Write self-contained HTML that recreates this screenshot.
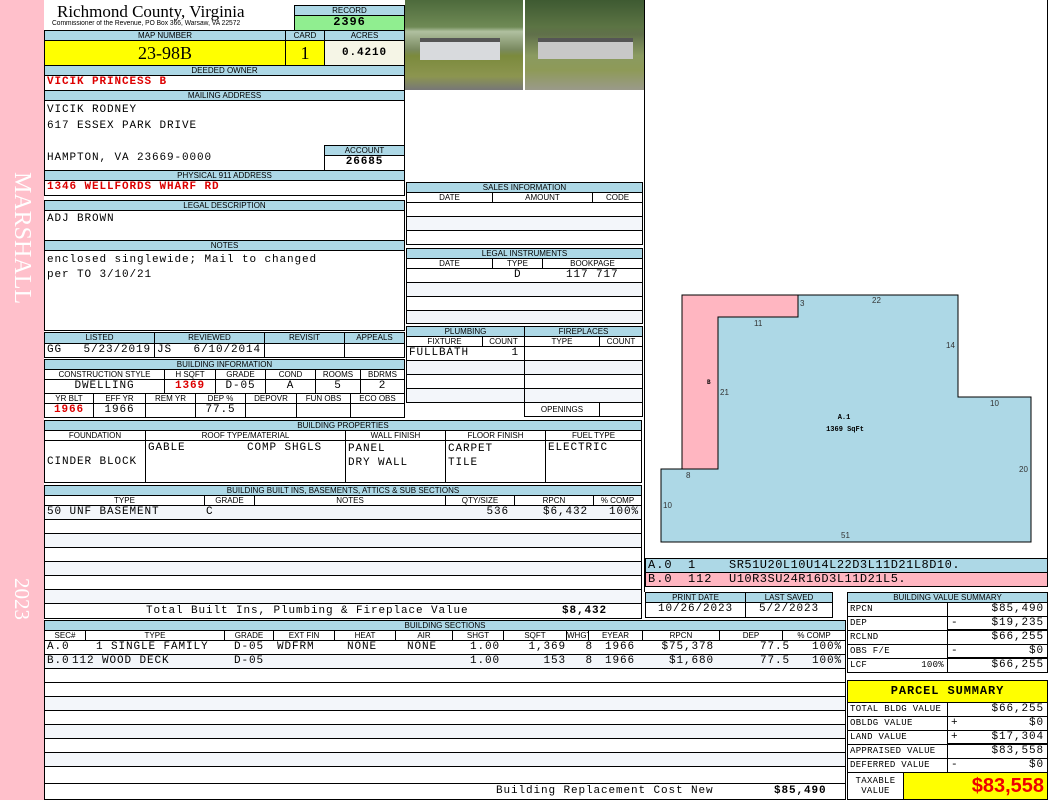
<!DOCTYPE html>
<html><head><meta charset="utf-8"><style>
*{margin:0;padding:0}
body{width:1050px;height:800px;position:relative;background:#fff;overflow:hidden;font-family:"Liberation Mono",monospace}
.a{position:absolute;box-sizing:border-box;white-space:nowrap;overflow:hidden}
.h{background:#add8e6;border:1px solid #000;font:8px/9px "Liberation Sans",sans-serif;text-align:center;color:#000}
.s{background:#fff;border:1px solid #000;font:8px/9px "Liberation Sans",sans-serif;text-align:center}
.c{background:#fff;border:1px solid #000;font:11px/13px "Liberation Mono",monospace;padding-left:2px;letter-spacing:0.9px}
.z{background:#f3f6fa}
.r{text-align:right;padding-right:3px}
.m{text-align:center;padding-left:0}
.red{color:#d00;font-weight:bold}
.sm{font:9px/12px "Liberation Mono",monospace;letter-spacing:0.3px}
.t{position:absolute;top:0;font:11px/13px "Liberation Mono",monospace;letter-spacing:0.9px}
.e{position:absolute;top:0;font:11px/13px "Liberation Mono",monospace;letter-spacing:0.9px;text-align:right}
</style></head><body>
<div class="a" style="left:0;top:0;width:44px;height:800px;background:#ffc0cb"></div>
<div class="a" style="left:6px;top:172px;width:32px;height:170px;color:#fff;font:24px/32px 'Liberation Serif',serif;writing-mode:vertical-rl">MARSHALL</div>
<div class="a" style="left:6px;top:578px;width:32px;height:50px;color:#fff;font:21px/32px 'Liberation Serif',serif;writing-mode:vertical-rl">2023</div>

<!-- header -->
<div class="a" style="left:57px;top:2px;font:17px/20px 'Liberation Serif',serif">Richmond County, Virginia</div>
<div class="a" style="left:52px;top:19px;font:7px/9px 'Liberation Sans',sans-serif;transform:scaleX(.95);transform-origin:left">Commissioner of the Revenue, PO Box 366, Warsaw, VA 22572</div>
<div class="a h" style="left:294px;top:5px;width:111px;height:11px">RECORD</div>
<div class="a c m" style="left:294px;top:15px;width:111px;height:16px;background:#90ee90;font-weight:bold;font-size:12px">2396</div>
<div class="a h" style="left:44px;top:30px;width:242px;height:11px">MAP NUMBER</div>
<div class="a h" style="left:285px;top:30px;width:40px;height:11px">CARD</div>
<div class="a h" style="left:324px;top:30px;width:81px;height:11px">ACRES</div>
<div class="a c m" style="left:44px;top:40px;width:242px;height:26px;background:#ffff00;font:18px/24px 'Liberation Serif',serif;letter-spacing:0">23-98B</div>
<div class="a c m" style="left:285px;top:40px;width:40px;height:26px;background:#ffff00;font:18px/24px 'Liberation Serif',serif;letter-spacing:0">1</div>
<div class="a c m" style="left:324px;top:40px;width:81px;height:26px;background:#f5f5e6;font-weight:bold;line-height:24px">0.4210</div>
<div class="a h" style="left:44px;top:65px;width:361px;height:11px">DEEDED OWNER</div>
<div class="a c red" style="left:44px;top:75px;width:361px;height:16px">VICIK PRINCESS B</div>
<div class="a h" style="left:44px;top:90px;width:361px;height:11px">MAILING ADDRESS</div>
<div class="a c" style="left:44px;top:100px;width:361px;height:71px;line-height:16px;padding-top:1px">VICIK RODNEY<br>617 ESSEX PARK DRIVE<br><br>HAMPTON, VA 23669-0000</div>
<div class="a h" style="left:324px;top:145px;width:81px;height:11px">ACCOUNT</div>
<div class="a c m" style="left:324px;top:155px;width:81px;height:16px;font-weight:bold">26685</div>
<div class="a h" style="left:44px;top:170px;width:361px;height:11px">PHYSICAL 911 ADDRESS</div>
<div class="a c red" style="left:44px;top:180px;width:361px;height:16px">1346 WELLFORDS WHARF RD</div>
<div class="a h" style="left:44px;top:200px;width:361px;height:11px">LEGAL DESCRIPTION</div>
<div class="a c" style="left:44px;top:210px;width:361px;height:31px;padding-top:2px">ADJ BROWN</div>
<div class="a h" style="left:44px;top:240px;width:361px;height:11px">NOTES</div>
<div class="a c" style="left:44px;top:250px;width:361px;height:81px;line-height:15px;padding-top:2px">enclosed singlewide; Mail to changed<br>per TO 3/10/21</div>

<!-- listed -->
<div class="a h" style="left:44px;top:332px;width:111px;height:12px">LISTED</div>
<div class="a h" style="left:154px;top:332px;width:111px;height:12px">REVIEWED</div>
<div class="a h" style="left:264px;top:332px;width:81px;height:12px">REVISIT</div>
<div class="a h" style="left:344px;top:332px;width:61px;height:12px">APPEALS</div>
<div class="a c" style="left:44px;top:343px;width:111px;height:15px">GG<span class="e" style="right:3px">5/23/2019</span></div>
<div class="a c" style="left:154px;top:343px;width:111px;height:15px">JS<span class="e" style="right:3px">6/10/2014</span></div>
<div class="a c" style="left:264px;top:343px;width:81px;height:15px"></div>
<div class="a c" style="left:344px;top:343px;width:61px;height:15px"></div>

<!-- building info -->
<div class="a h" style="left:44px;top:359px;width:361px;height:11px">BUILDING INFORMATION</div>
<div class="a s" style="left:44px;top:369px;width:121px;height:11px">CONSTRUCTION STYLE</div>
<div class="a s" style="left:164px;top:369px;width:52px;height:11px">H SQFT</div>
<div class="a s" style="left:215px;top:369px;width:51px;height:11px">GRADE</div>
<div class="a s" style="left:265px;top:369px;width:51px;height:11px">COND</div>
<div class="a s" style="left:315px;top:369px;width:46px;height:11px">ROOMS</div>
<div class="a s" style="left:360px;top:369px;width:45px;height:11px">BDRMS</div>
<div class="a c m" style="left:44px;top:379px;width:121px;height:15px">DWELLING</div>
<div class="a c m red" style="left:164px;top:379px;width:52px;height:15px">1369</div>
<div class="a c m" style="left:215px;top:379px;width:51px;height:15px">D-05</div>
<div class="a c m" style="left:265px;top:379px;width:51px;height:15px">A</div>
<div class="a c m" style="left:315px;top:379px;width:46px;height:15px">5</div>
<div class="a c m" style="left:360px;top:379px;width:45px;height:15px">2</div>
<div class="a s" style="left:44px;top:393px;width:50px;height:11px">YR BLT</div>
<div class="a s" style="left:93px;top:393px;width:53px;height:11px">EFF YR</div>
<div class="a s" style="left:145px;top:393px;width:51px;height:11px">REM YR</div>
<div class="a s" style="left:195px;top:393px;width:51px;height:11px">DEP %</div>
<div class="a s" style="left:245px;top:393px;width:52px;height:11px">DEPOVR</div>
<div class="a s" style="left:296px;top:393px;width:55px;height:11px">FUN OBS</div>
<div class="a s" style="left:350px;top:393px;width:55px;height:11px">ECO OBS</div>
<div class="a c m red" style="left:44px;top:403px;width:50px;height:15px">1966</div>
<div class="a c m" style="left:93px;top:403px;width:53px;height:15px">1966</div>
<div class="a c" style="left:145px;top:403px;width:51px;height:15px"></div>
<div class="a c m" style="left:195px;top:403px;width:51px;height:15px">77.5</div>
<div class="a c" style="left:245px;top:403px;width:52px;height:15px"></div>
<div class="a c" style="left:296px;top:403px;width:55px;height:15px"></div>
<div class="a c" style="left:350px;top:403px;width:55px;height:15px"></div>

<!-- building properties -->
<div class="a h" style="left:44px;top:420px;width:598px;height:11px">BUILDING PROPERTIES</div>
<div class="a s" style="left:44px;top:430px;width:102px;height:11px">FOUNDATION</div>
<div class="a s" style="left:145px;top:430px;width:201px;height:11px">ROOF TYPE/MATERIAL</div>
<div class="a s" style="left:345px;top:430px;width:101px;height:11px">WALL FINISH</div>
<div class="a s" style="left:445px;top:430px;width:101px;height:11px">FLOOR FINISH</div>
<div class="a s" style="left:545px;top:430px;width:97px;height:11px">FUEL TYPE</div>
<div class="a c" style="left:44px;top:440px;width:102px;height:43px;padding-top:15px">CINDER BLOCK</div>
<div class="a c" style="left:145px;top:440px;width:201px;height:43px;padding-top:1px">GABLE<span class="t" style="left:101px;top:1px">COMP SHGLS</span></div>
<div class="a c" style="left:345px;top:440px;width:101px;height:43px;padding-top:1px;line-height:14px">PANEL<br>DRY WALL</div>
<div class="a c" style="left:445px;top:440px;width:101px;height:43px;padding-top:1px;line-height:14px">CARPET<br>TILE</div>
<div class="a c" style="left:545px;top:440px;width:97px;height:43px;padding-top:1px">ELECTRIC</div>

<!-- built ins -->
<div class="a h" style="left:44px;top:485px;width:598px;height:11px">BUILDING BUILT INS, BASEMENTS, ATTICS &amp; SUB SECTIONS</div>
<div class="a s" style="left:44px;top:495px;width:161px;height:11px">TYPE</div>
<div class="a s" style="left:204px;top:495px;width:51px;height:11px">GRADE</div>
<div class="a s" style="left:254px;top:495px;width:192px;height:11px">NOTES</div>
<div class="a s" style="left:445px;top:495px;width:70px;height:11px">QTY/SIZE</div>
<div class="a s" style="left:514px;top:495px;width:80px;height:11px">RPCN</div>
<div class="a s" style="left:593px;top:495px;width:49px;height:11px">% COMP</div>
<div class="a c" style="left:44px;top:505px;width:598px;height:15px;background:#f3f6fa">50 UNF BASEMENT<span class="t" style="left:161px">C</span><span class="e" style="right:132px">536</span><span class="e" style="right:53px">$6,432</span><span class="e" style="right:2px">100%</span></div>
<div class="a c" style="left:44px;top:519px;width:598px;height:15px"></div>
<div class="a c z" style="left:44px;top:533px;width:598px;height:15px"></div>
<div class="a c" style="left:44px;top:547px;width:598px;height:15px"></div>
<div class="a c z" style="left:44px;top:561px;width:598px;height:15px"></div>
<div class="a c" style="left:44px;top:575px;width:598px;height:15px"></div>
<div class="a c z" style="left:44px;top:589px;width:598px;height:15px"></div>
<div class="a c" style="left:44px;top:603px;width:598px;height:16px;padding-left:101px;line-height:15px">Total Built Ins, Plumbing &amp; Fireplace Value<span style="position:absolute;left:517px;font-weight:bold">$8,432</span></div>

<!-- building sections -->
<div class="a h" style="left:44px;top:620px;width:802px;height:11px">BUILDING SECTIONS</div>
<div class="a" style="left:44px;top:630px;width:802px;height:11px;border:1px solid #000;font:8px/9px 'Liberation Sans',sans-serif">
<span class="a s" style="left:-1px;top:-1px;width:42px;height:11px">SEC#</span><span class="a s" style="left:40px;top:-1px;width:140px;height:11px">TYPE</span><span class="a s" style="left:179px;top:-1px;width:50px;height:11px">GRADE</span><span class="a s" style="left:228px;top:-1px;width:62px;height:11px">EXT FIN</span><span class="a s" style="left:289px;top:-1px;width:62px;height:11px">HEAT</span><span class="a s" style="left:350px;top:-1px;width:58px;height:11px">AIR</span><span class="a s" style="left:407px;top:-1px;width:52px;height:11px">SHGT</span><span class="a s" style="left:458px;top:-1px;width:64px;height:11px">SQFT</span><span class="a s" style="left:521px;top:-1px;width:23px;height:11px">WHGT</span><span class="a s" style="left:543px;top:-1px;width:55px;height:11px">EYEAR</span><span class="a s" style="left:597px;top:-1px;width:78px;height:11px">RPCN</span><span class="a s" style="left:674px;top:-1px;width:64px;height:11px">DEP</span><span class="a s" style="left:737px;top:-1px;width:64px;height:11px">% COMP</span></div>
<div class="a c" style="left:44px;top:640px;width:802px;height:15px">A.0<span class="t" style="left:51px">1 SINGLE FAMILY</span><span class="t" style="left:189px">D-05</span><span class="t" style="left:232px">WDFRM</span><span class="t" style="left:302px">NONE</span><span class="t" style="left:362px">NONE</span><span class="e" style="right:345px">1.00</span><span class="e" style="right:279px">1,369</span><span class="e" style="right:252px">8</span><span class="t" style="left:560px">1966</span><span class="e" style="right:131px">$75,378</span><span class="e" style="right:55px">77.5</span><span class="e" style="right:3px">100%</span></div>
<div class="a c z" style="left:44px;top:654px;width:802px;height:15px">B.0<span class="t" style="left:27px">112 WOOD DECK</span><span class="t" style="left:189px">D-05</span><span class="e" style="right:345px">1.00</span><span class="e" style="right:279px">153</span><span class="e" style="right:252px">8</span><span class="t" style="left:560px">1966</span><span class="e" style="right:131px">$1,680</span><span class="e" style="right:55px">77.5</span><span class="e" style="right:3px">100%</span></div>
<div class="a c" style="left:44px;top:668px;width:802px;height:15px"></div>
<div class="a c" style="left:44px;top:682px;width:802px;height:15px"></div>
<div class="a c z" style="left:44px;top:696px;width:802px;height:15px"></div>
<div class="a c" style="left:44px;top:710px;width:802px;height:15px"></div>
<div class="a c z" style="left:44px;top:724px;width:802px;height:15px"></div>
<div class="a c" style="left:44px;top:738px;width:802px;height:15px"></div>
<div class="a c z" style="left:44px;top:752px;width:802px;height:15px"></div>
<div class="a c" style="left:44px;top:766px;width:802px;height:18px"></div>
<div class="a c" style="left:44px;top:783px;width:802px;height:17px;padding-left:451px;line-height:15px">Building Replacement Cost New<span style="position:absolute;left:729px;font-weight:bold">$85,490</span></div>

<!-- photos -->
<div class="a" style="left:405px;top:0;width:118px;height:90px;background:linear-gradient(#4d6a3c 0,#6f8a55 30%,#b0c0a0 35%,#7a8a60 55%,#7b8a3c 62%,#8c9550 85%,#777 100%)"></div>
<div class="a" style="left:420px;top:38px;width:80px;height:22px;background:#d8dadd;border-top:4px solid #555"></div>
<div class="a" style="left:525px;top:0;width:119px;height:90px;background:linear-gradient(#3e5a32 0,#5c7444 30%,#60704a 38%,#8a9a60 62%,#8e9a58 78%,#9a9a8a 100%)"></div>
<div class="a" style="left:538px;top:38px;width:95px;height:21px;background:#c8c8c8;border-top:4px solid #555"></div>

<!-- sales -->
<div class="a h" style="left:406px;top:182px;width:237px;height:11px">SALES INFORMATION</div>
<div class="a s" style="left:406px;top:192px;width:87px;height:11px">DATE</div>
<div class="a s" style="left:492px;top:192px;width:101px;height:11px">AMOUNT</div>
<div class="a s" style="left:592px;top:192px;width:51px;height:11px">CODE</div>
<div class="a c" style="left:406px;top:202px;width:237px;height:15px"></div>
<div class="a c z" style="left:406px;top:216px;width:237px;height:15px"></div>
<div class="a c" style="left:406px;top:230px;width:237px;height:15px"></div>
<div class="a h" style="left:406px;top:248px;width:237px;height:11px">LEGAL INSTRUMENTS</div>
<div class="a s" style="left:406px;top:258px;width:87px;height:11px">DATE</div>
<div class="a s" style="left:492px;top:258px;width:51px;height:11px">TYPE</div>
<div class="a s" style="left:542px;top:258px;width:101px;height:11px">BOOKPAGE</div>
<div class="a c" style="left:406px;top:268px;width:237px;height:15px"><span class="t" style="left:107px">D</span><span class="t" style="left:159px">117 717</span></div>
<div class="a c z" style="left:406px;top:282px;width:237px;height:15px"></div>
<div class="a c" style="left:406px;top:296px;width:237px;height:15px"></div>
<div class="a c z" style="left:406px;top:310px;width:237px;height:14px"></div>

<!-- plumbing -->
<div class="a h" style="left:406px;top:326px;width:119px;height:11px">PLUMBING</div>
<div class="a h" style="left:524px;top:326px;width:119px;height:11px">FIREPLACES</div>
<div class="a s" style="left:406px;top:336px;width:77px;height:11px">FIXTURE</div>
<div class="a s" style="left:482px;top:336px;width:43px;height:11px">COUNT</div>
<div class="a s" style="left:524px;top:336px;width:76px;height:11px">TYPE</div>
<div class="a s" style="left:599px;top:336px;width:44px;height:11px">COUNT</div>
<div class="a c" style="left:406px;top:346px;width:119px;height:15px">FULLBATH<span style="position:absolute;right:5px">1</span></div>
<div class="a c z" style="left:406px;top:360px;width:119px;height:15px"></div>
<div class="a c" style="left:406px;top:374px;width:119px;height:15px"></div>
<div class="a c z" style="left:406px;top:388px;width:119px;height:15px"></div>
<div class="a c" style="left:524px;top:346px;width:119px;height:15px"></div>
<div class="a c z" style="left:524px;top:360px;width:119px;height:15px"></div>
<div class="a c" style="left:524px;top:374px;width:119px;height:15px"></div>
<div class="a c z" style="left:524px;top:388px;width:119px;height:15px"></div>
<div class="a s" style="left:524px;top:402px;width:76px;height:15px;line-height:13px">OPENINGS</div>
<div class="a s" style="left:599px;top:402px;width:44px;height:15px"></div>

<!-- right column frame lines -->
<div class="a" style="left:644px;top:0;width:1px;height:592px;background:#000"></div>
<div class="a" style="left:1047px;top:0;width:1px;height:560px;background:#000"></div>

<!-- sketch -->
<svg class="a" style="left:645px;top:280px" width="402" height="278" viewBox="645 280 402 278">
<polygon points="682,295 798,295 798,317 718,317 718,469 682,469" fill="#ffb6c1" stroke="#000" stroke-width="1"/>
<polygon points="798,295 958,295 958,397 1031,397 1031,542 661,542 661,469 718,469 718,317 798,317" fill="#add8e6" stroke="#000" stroke-width="1"/>
<g font-family="Liberation Sans,sans-serif" font-size="8" fill="#333">
<text x="800" y="306">3</text><text x="872" y="303">22</text><text x="754" y="326">11</text><text x="946" y="348">14</text><text x="720" y="395">21</text><text x="990" y="406">10</text><text x="1019" y="472">20</text><text x="686" y="478">8</text><text x="663" y="508">10</text><text x="841" y="538">51</text>
</g>
<text x="707" y="384" font-family="Liberation Mono,monospace" font-size="6" font-weight="bold">B</text>
<text x="844" y="419" font-family="Liberation Mono,monospace" font-size="7" font-weight="bold" text-anchor="middle">A.1</text>
<text x="845" y="431" font-family="Liberation Mono,monospace" font-size="7" font-weight="bold" text-anchor="middle">1369 SqFt</text>
</svg>
<div class="a c" style="left:645px;top:558px;width:403px;height:15px;background:#add8e6;font-size:12px;letter-spacing:1px">A.0<span class="t" style="left:42px;font-size:12px">1</span><span class="t" style="left:83px;font-size:12px;letter-spacing:0.5px">SR51U20L10U14L22D3L11D21L8D10.</span></div>
<div class="a c" style="left:645px;top:572px;width:403px;height:15px;background:#ffb6c1;font-size:12px;letter-spacing:1px">B.0<span class="t" style="left:42px;font-size:12px">112</span><span class="t" style="left:83px;font-size:12px;letter-spacing:0.5px">U10R3SU24R16D3L11D21L5.</span></div>

<!-- print date -->
<div class="a h" style="left:645px;top:592px;width:101px;height:11px">PRINT DATE</div>
<div class="a h" style="left:745px;top:592px;width:88px;height:11px">LAST SAVED</div>
<div class="a c m" style="left:645px;top:602px;width:101px;height:16px">10/26/2023</div>
<div class="a c m" style="left:745px;top:602px;width:88px;height:16px">5/2/2023</div>

<!-- value summary -->
<div class="a h" style="left:847px;top:592px;width:201px;height:11px">BUILDING VALUE SUMMARY</div>
<div class="a c sm" style="left:847px;top:602px;width:101px;height:15px">RPCN</div>
<div class="a c r" style="left:947px;top:602px;width:101px;height:15px">$85,490</div>
<div class="a c sm" style="left:847px;top:616px;width:101px;height:15px">DEP</div>
<div class="a c r" style="left:947px;top:616px;width:101px;height:15px;border-bottom:2px solid #000">$19,235<span style="position:absolute;left:3px">-</span></div>
<div class="a c sm" style="left:847px;top:630px;width:101px;height:15px">RCLND</div>
<div class="a c r" style="left:947px;top:630px;width:101px;height:15px">$66,255</div>
<div class="a c sm" style="left:847px;top:644px;width:101px;height:15px">OBS F/E</div>
<div class="a c r" style="left:947px;top:644px;width:101px;height:15px;border-bottom:2px solid #000">$0<span style="position:absolute;left:3px">-</span></div>
<div class="a c sm" style="left:847px;top:658px;width:101px;height:15px">LCF<span style="position:absolute;right:3px">100%</span></div>
<div class="a c r" style="left:947px;top:658px;width:101px;height:15px">$66,255</div>

<!-- parcel summary -->
<div class="a c m" style="left:847px;top:680px;width:201px;height:23px;background:#ffff00;font-weight:bold;font-size:12px;line-height:21px">PARCEL SUMMARY</div>
<div class="a c sm" style="left:847px;top:702px;width:101px;height:15px">TOTAL BLDG VALUE</div>
<div class="a c r" style="left:947px;top:702px;width:101px;height:15px">$66,255</div>
<div class="a c sm" style="left:847px;top:716px;width:101px;height:15px">OBLDG VALUE</div>
<div class="a c r" style="left:947px;top:716px;width:101px;height:15px">$0<span style="position:absolute;left:3px">+</span></div>
<div class="a c sm" style="left:847px;top:730px;width:101px;height:15px">LAND VALUE</div>
<div class="a c r" style="left:947px;top:730px;width:101px;height:15px;border-bottom:2px solid #000">$17,304<span style="position:absolute;left:3px">+</span></div>
<div class="a c sm" style="left:847px;top:744px;width:101px;height:15px">APPRAISED VALUE</div>
<div class="a c r" style="left:947px;top:744px;width:101px;height:15px">$83,558</div>
<div class="a c sm" style="left:847px;top:758px;width:101px;height:15px">DEFERRED VALUE</div>
<div class="a c r" style="left:947px;top:758px;width:101px;height:15px">$0<span style="position:absolute;left:3px">-</span></div>
<div class="a c m sm" style="left:847px;top:772px;width:57px;height:28px;line-height:10px;padding-top:3px">TAXABLE<br>VALUE</div>
<div class="a c r" style="left:903px;top:772px;width:145px;height:28px;background:#ffff00;color:#e00;font:bold 20px/26px 'Liberation Sans',sans-serif;letter-spacing:0">$83,558</div>
</body></html>
